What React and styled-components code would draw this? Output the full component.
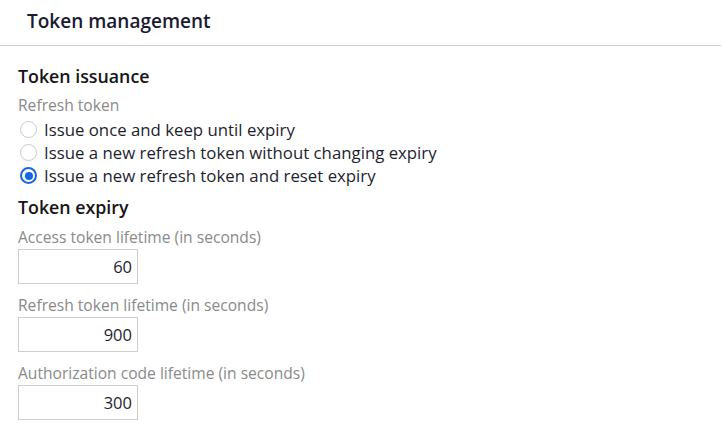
import React from 'react';
import styled, { createGlobalStyle } from 'styled-components';

const GlobalStyle = createGlobalStyle`
  body {
    margin: 0;
    background: #fff;
    font-family: "Open Sans", "Noto Sans", sans-serif;
  }
`;

const Page = styled.div`
  width: 722px;
`;

const Header = styled.div`
  height: 46px;
  box-sizing: border-box;
  padding: 0 0 3px 27px;
  display: flex;
  align-items: center;
  border-bottom: 1px solid #cfcde0;
  margin-right: 1px;
  font-size: 19px;
  font-weight: 600;
  color: #1a1a32;
`;

const Body = styled.div`
  padding: 19px 18px 0;
`;

const SectionTitle = styled.div`
  font-size: 17.8px;
  font-weight: 600;
  color: #151515;
  line-height: 22px;
  margin-top: ${p => p.$top || 0}px;
`;

const Label = styled.div`
  font-size: 15.6px;
  color: #8a8a8a;
  line-height: 20px;
  margin-top: ${p => p.$top || 0}px;
  margin-bottom: ${p => p.$bottom || 0}px;
`;

const RadioList = styled.div`
  display: flex;
  flex-direction: column;
  margin-top: 3px;
`;

const RadioRow = styled.label`
  display: flex;
  align-items: center;
  gap: 7px;
  height: 23px;
  font-size: 16.8px;
  color: #1e1e2e;
`;

const RadioCircle = styled.span`
  width: 17px;
  height: 17px;
  box-sizing: border-box;
  border-radius: 50%;
  border: ${p => (p.$checked ? '2px solid #1467e4' : '1px solid #c9c9c9')};
  margin-left: 2px;
  display: flex;
  align-items: center;
  justify-content: center;

  &::after {
    content: '';
    width: 8px;
    height: 8px;
    border-radius: 50%;
    background: #1467e4;
    display: ${p => (p.$checked ? 'block' : 'none')};
  }
`;

const Field = styled.div`
  display: flex;
  flex-direction: column;
  margin-top: ${p => p.$top}px;
`;

const NumberBox = styled.div`
  width: 120px;
  height: 35px;
  box-sizing: border-box;
  border: 1px solid #cfcfcf;
  display: flex;
  align-items: center;
  justify-content: flex-end;
  padding-right: 5px;
  font-size: 16.5px;
  color: #1e1e2e;
`;

const options = [
  'Issue once and keep until expiry',
  'Issue a new refresh token without changing expiry',
  'Issue a new refresh token and reset expiry',
];

const lifetimes = [
  { label: 'Access token lifetime (in seconds)', value: 60 },
  { label: 'Refresh token lifetime (in seconds)', value: 900 },
  { label: 'Authorization code lifetime (in seconds)', value: 300 },
];

const App = () => {
  return (
    <Page>
      <GlobalStyle />
      <Header>Token management</Header>
      <Body>
        <SectionTitle>Token issuance</SectionTitle>
        <Label $top={8}>Refresh token</Label>
        <RadioList>
          {options.map((o, i) => (
            <RadioRow key={o}>
              <RadioCircle $checked={i === 2} />
              {o}
            </RadioRow>
          ))}
        </RadioList>
        <SectionTitle $top={9}>Token expiry</SectionTitle>
        {lifetimes.map((f, i) => (
          <Field key={f.label} $top={i === 0 ? 9 : 11}>
            <Label $bottom={2}>{f.label}</Label>
            <NumberBox>{f.value}</NumberBox>
          </Field>
        ))}
      </Body>
    </Page>
  );
};

export default App;
